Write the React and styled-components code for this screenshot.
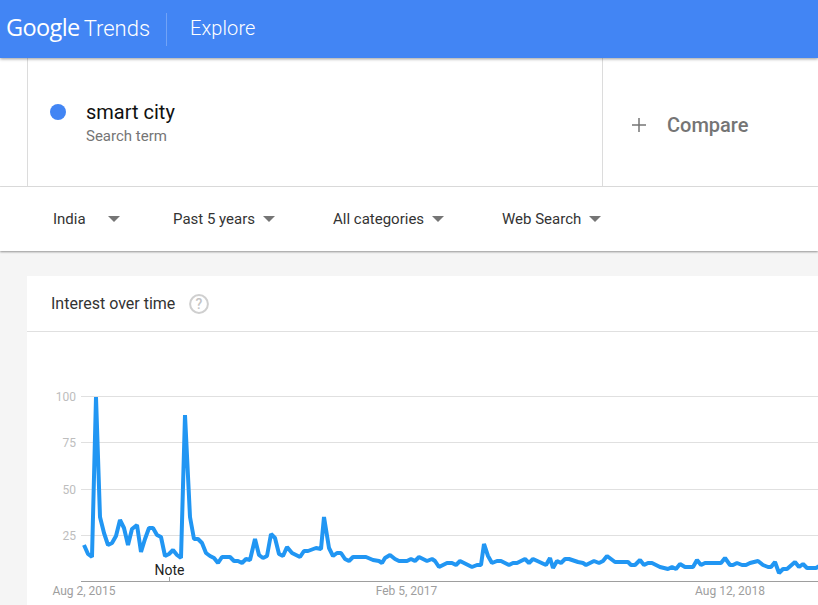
import React from 'react'
import styled, { createGlobalStyle } from 'styled-components'

const GlobalStyle = createGlobalStyle`
  html, body {
    margin: 0;
    padding: 0;
    height: 605px;
    overflow: hidden;
    background: #f5f5f5;
    font-family: Roboto, "Liberation Sans", sans-serif;
  }
`

const filters = [
  { label: 'India', width: 120, gap: 21 },
  { label: 'Past 5 years', width: 160, gap: 7 },
  { label: 'All categories', width: 169, gap: 7 },
  { label: 'Web Search', width: 120, gap: 7 },
]

const ticks = [
  { y: 396.5, label: '100' },
  { y: 442.5, label: '75' },
  { y: 489.5, label: '50' },
  { y: 535.5, label: '25' },
]

const dates = [
  { x: 84, label: 'Aug 2, 2015' },
  { x: 406.5, label: 'Feb 5, 2017' },
  { x: 730, label: 'Aug 12, 2018' },
]

// traced from the reference, page pixels
const line = `84,545 88,554 92,557 96,397 100,517 104,533 108,545 112,543 116,536 120,520 124,528 128,545
132,529 137,525 141,552 145,539 149,528 153,528 157,535 161,537 165,556 169,554 173,550 177,555 181,558
185,415 190,517 194,539 198,539 202,543 206,553 210,556 214,558 218,563 222,557 230,557 234,561 238,561
242,563 246,559 250,560 255,539 259,555 263,558 267,556 271,534 275,538 279,554 283,556 287,547 292,553
300,557 304,551 308,551 316,548 321,549 324,517 329,548 333,556 337,553 341,553 345,559 349,561 353,557
366,557 373,560 379,561 382,563 385,558 390,555 395,559 399,561 407,561 411,559 415,561 419,557 427,561
432,559 435,561 439,567 447,563 452,563 456,565 460,561 472,567 477,565 481,565 484,544 488,556 492,563
497,561 501,561 509,565 513,563 517,563 525,559 529,563 533,559 546,565 550,558 553,568 557,561 561,563
565,559 569,559 578,562 583,563 586,565 594,561 599,563 603,561 607,556 615,562 628,562 631,565 635,565
640,560 644,565 648,563 652,563 660,567 668,569 672,567 676,569 680,564 685,567 693,567 697,560 701,565
705,563 721,563 725,558 730,565 733,565 737,563 742,565 746,565 750,563 758,561 763,565 768,567 771,567
775,562 779,573 783,569 787,569 795,562 799,567 803,564 807,568 816,568 821,565`

export default function App() {
  return (
    <>
      <GlobalStyle />
      <Header>
        <Logo>
          <LogoMark>Google</LogoMark>
          <LogoWord>Trends</LogoWord>
        </Logo>
        <HeaderDivider />
        <HeaderTitle>Explore</HeaderTitle>
      </Header>

      <SearchRow>
        <TermCard>
          <Dot />
          <div>
            <TermName>smart city</TermName>
            <TermKind>Search term</TermKind>
          </div>
        </TermCard>
        <CompareBox>
          <PlusIcon viewBox="0 0 16 16">
            <path d="M8 1v14M1 8h14" stroke="#757575" strokeWidth="1.5" fill="none" />
          </PlusIcon>
          <CompareLabel>Compare</CompareLabel>
        </CompareBox>
      </SearchRow>

      <FilterBar>
        {filters.map(f => (
          <Filter key={f.label} $width={f.width} $gap={f.gap}>
            {f.label}
            <Caret />
          </Filter>
        ))}
      </FilterBar>

      <Content>
        <Card>
          <CardHead>
            <CardTitle>Interest over time</CardTitle>
            <HelpIcon viewBox="0 0 20 20">
              <circle cx="10" cy="10" r="8.9" fill="none" stroke="#cfcfcf" strokeWidth="2" />
              <text x="10" y="15" textAnchor="middle" fontSize="14" fontWeight="500" fill="#c4c4c4" fontFamily="Roboto, sans-serif">?</text>
            </HelpIcon>
          </CardHead>
          <ChartBody>
            <Chart viewBox="27 332 791 273">
              {ticks.map(t => (
                <g key={t.label}>
                  <line x1="81" x2="818" y1={t.y} y2={t.y} stroke="#e0e0e0" strokeWidth="1" />
                  <AxisText x="76" y={t.y + 4} textAnchor="end">{t.label}</AxisText>
                </g>
              ))}
              <line x1="81" x2="818" y1="581.5" y2="581.5" stroke="#9e9e9e" strokeWidth="1" />
              <line x1="169.5" x2="169.5" y1="577" y2="581" stroke="#9e9e9e" strokeWidth="1" />
              <polyline points={line} fill="none" stroke="#2196f3" strokeWidth="4" strokeLinejoin="bevel" />
              <NoteText x="169.5" y="575" textAnchor="middle">Note</NoteText>
              {dates.map(d => (
                <DateText key={d.label} x={d.x} y="595" textAnchor="middle">{d.label}</DateText>
              ))}
            </Chart>
          </ChartBody>
        </Card>
      </Content>
    </>
  )
}

const Header = styled.header`
  position: relative;
  z-index: 3;
  height: 58px;
  background: #4285f4;
  box-shadow: 0 1px 3px rgba(0, 0, 0, 0.4);
  display: flex;
  align-items: center;
  color: #fff;
`
const Logo = styled.div`
  display: flex;
  align-items: baseline;
  gap: 4px;
  width: 166px;
  padding-left: 6px;
  box-sizing: border-box;
  margin-top: -5px;
`
const LogoMark = styled.span`
  font-family: "Open Sans", sans-serif;
  font-size: 23.5px;
  letter-spacing: -0.6px;
`
const LogoWord = styled.span`
  font-size: 22px;
  font-weight: 300;
`
const HeaderDivider = styled.div`
  width: 1px;
  height: 33px;
  background: rgba(255, 255, 255, 0.25);
`
const HeaderTitle = styled.div`
  margin-left: 23px;
  margin-top: -2px;
  font-size: 20px;
  font-weight: 300;
  letter-spacing: 0.1px;
`
const SearchRow = styled.section`
  height: 128px;
  background: #fff;
  border-bottom: 1px solid #e0e0e0;
  padding-left: 27px;
  display: flex;
`
const TermCard = styled.div`
  box-sizing: border-box;
  width: 576px;
  border-left: 1px solid #dcdcdc;
  border-right: 1px solid #dcdcdc;
  padding-left: 22px;
  display: flex;
  align-items: center;
  gap: 20px;
`
const Dot = styled.span`
  width: 16px;
  height: 16px;
  border-radius: 50%;
  background: #4285f4;
  margin-bottom: 20px;
`
const TermName = styled.div`
  font-size: 20px;
  line-height: 26px;
  color: #111;
`
const TermKind = styled.div`
  font-size: 15px;
  line-height: 18px;
  margin-top: 2px;
  color: #757575;
`
const CompareBox = styled.div`
  flex: 1;
  padding: 5px 0 0 28px;
  display: flex;
  align-items: center;
  gap: 20px;
`
const PlusIcon = styled.svg`
  width: 16px;
  height: 16px;
`
const CompareLabel = styled.div`
  font-size: 20px;
  font-weight: 500;
  color: #757575;
`
const FilterBar = styled.nav`
  position: relative;
  z-index: 2;
  height: 64px;
  background: #fff;
  box-shadow: 0 1px 2px rgba(0, 0, 0, 0.4);
  padding-left: 53px;
  display: flex;
  align-items: center;
`
const Filter = styled.div`
  width: ${p => p.$width}px;
  display: flex;
  align-items: center;
  gap: ${p => p.$gap}px;
  font-size: 15px;
  color: #333;
`
const Caret = styled.span`
  width: 0;
  height: 0;
  margin-left: 1px;
  border-left: 6px solid transparent;
  border-right: 6px solid transparent;
  border-top: 6px solid #757575;
`
const Content = styled.main`
  padding: 25px 0 0 27px;
  background: #f5f5f5;
`
const Card = styled.section`
  background: #fff;
  height: 330px;
  overflow: hidden;
`
const CardHead = styled.div`
  height: 56px;
  box-sizing: border-box;
  border-bottom: 1px solid #e0e0e0;
  padding-left: 24px;
  display: flex;
  align-items: center;
  gap: 14px;
`
const CardTitle = styled.div`
  font-size: 16px;
  color: #333;
`
const HelpIcon = styled.svg`
  width: 20px;
  height: 20px;
`
const ChartBody = styled.div`
  height: 273px;
`
const Chart = styled.svg`
  display: block;
  width: 791px;
  height: 273px;
`
const AxisText = styled.text`
  font-size: 12px;
  fill: #bdbdbd;
`
const NoteText = styled.text`
  font-size: 14px;
  fill: #222;
`
const DateText = styled.text`
  font-size: 12px;
  fill: #9e9e9e;
`
